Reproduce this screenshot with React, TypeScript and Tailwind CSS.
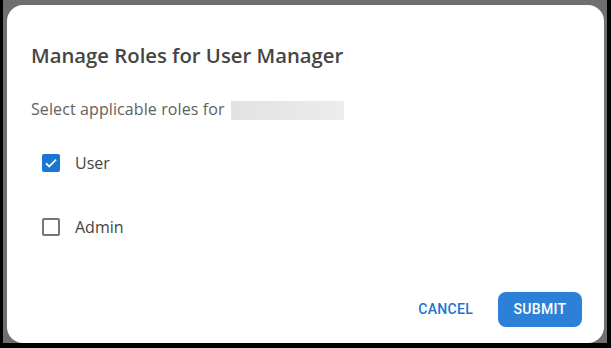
import React from "react";

export default function App() {
  return (
    <div className="w-[611px] h-[348px] bg-black pl-[3px] pr-[4px] pb-[5px] overflow-hidden">
      <div className="w-full h-full bg-[#6f6f6f] pl-[4px] pr-[3px] pt-[5px]">
        <div
          className="w-full h-full bg-white rounded-[16px] flex flex-col text-[#3d3d3d]"
          style={{ fontFamily: '"Open Sans", "Noto Sans", sans-serif' }}
        >
          <div className="pl-[24px] pt-[36px] text-[20.3px] font-semibold leading-[28px] text-[#454545]">
            Manage Roles for User Manager
          </div>
          <div className="pl-[24px] mt-[29px] flex items-center text-[16px] text-[#616161] leading-[22px]">
            <span className="tracking-[0.1px]">Select applicable roles for</span>
            <span className="ml-[6px] mt-[2px] inline-block w-[113px] h-[19px] bg-gradient-to-r from-[#e2e2e2] to-[#ececec]" />
          </div>
          <div className="pl-[35px] mt-[34px] flex flex-col gap-[46px]">
            <label className="flex items-center h-[18px]">
              <span className="w-[18px] h-[18px] rounded-[2px] bg-[#1976d2] flex items-center justify-center">
                <svg width="16" height="16" viewBox="0 0 24 24" fill="none">
                  <path d="M4.5 12.5l4.8 4.8L19.5 7" stroke="white" strokeWidth="2.8" fill="none" />
                </svg>
              </span>
              <span className="ml-[15px] text-[16px] text-[#444]">User</span>
            </label>
            <label className="flex items-center h-[18px]">
              <span className="w-[18px] h-[18px] rounded-[2px] border-2 border-[#757575] bg-white" />
              <span className="ml-[15px] text-[16px] text-[#444]">Admin</span>
            </label>
          </div>
          <div className="mt-auto mb-[16px] pr-[22px] flex justify-end items-center gap-[8px]" style={{ fontFamily: 'Roboto, sans-serif' }}>
            <button className="h-[35px] px-[17px] text-[14px] font-medium tracking-[0.3px] text-[#1976d2]">
              CANCEL
            </button>
            <button className="h-[35px] w-[84px] rounded-[8px] bg-[#2d80d8] text-white text-[14px] font-medium tracking-[0.3px]">
              SUBMIT
            </button>
          </div>
        </div>
      </div>
    </div>
  );
}
